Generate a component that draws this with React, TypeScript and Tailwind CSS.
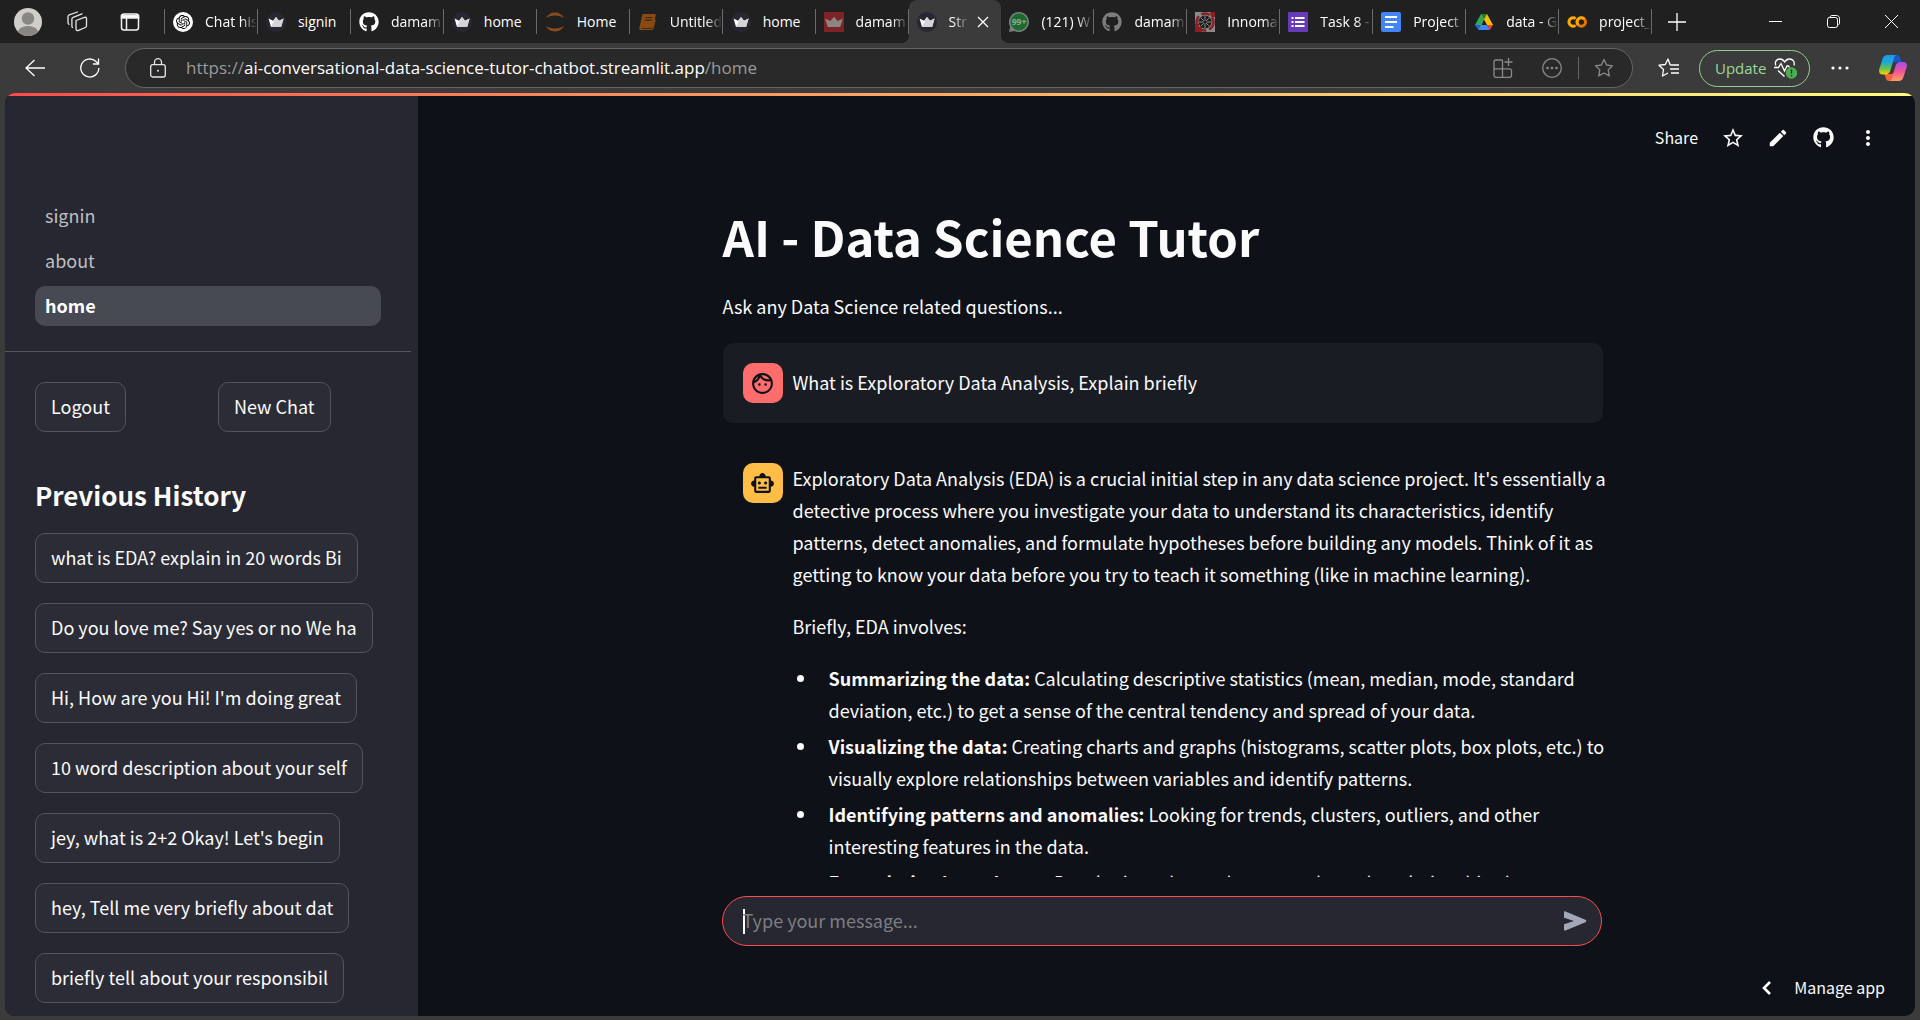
import React, { type ReactNode } from "react";
import clsx from "clsx";
import { FaGithub } from "react-icons/fa";
import { SiOpenai } from "react-icons/si";
import { MdOutlineFace, MdOutlineSmartToy, MdEdit, MdMoreVert, MdStarBorder } from "react-icons/md";

const Crown = () => (
  <svg viewBox="0 0 20 20" className="size-5 shrink-0">
    <circle cx="10" cy="10" r="10" fill="#262730" />
    <path d="M2.600 6.500 7 8.700 10 5l3 3.700 4.600-2.200-2.400 8.300H4.900z" fill="#fff" />
    <path d="M10 5l3 3.700 4.600-2.200-2.400 8.300H4.900z" fill="#d4d4d9" />
  </svg>
);

const RedCrown = () => (
  <svg viewBox="0 0 20 20" className="size-5 shrink-0">
    <rect width="20" height="20" fill="#7d2226" />
    <path d="M1 6.500 6.400 9 10 4.800 13.600 9 19 6.500 16.200 15H3.800z" fill="#8e8482" />
  </svg>
);

const Jupyter = () => (
  <svg viewBox="0 0 20 20" className="size-5 shrink-0" fill="#8a4a1e">
    <path d="M1 6.200C2.600 2.500 6 .500 10 .500s7.400 2 9 5.700C16.800 4.300 13.600 3.500 10 3.500S3.200 4.300 1 6.200zM1 13.800C3.200 15.700 6.400 16.500 10 16.500s6.800-.8 9-2.700C17.400 17.500 14 19.500 10 19.500s-7.400-2-9-5.700z" />
  </svg>
);

const Book = () => (
  <svg viewBox="0 0 20 20" className="size-5 shrink-0">
    <path d="M5.500 2h11.200c.8 0 1.200.7 1 1.400l-3 11.400c-.2.700-.7 1.100-1.400 1.100H3.800c-.5 0-.6.800 0 .8h10.400l2.700-9.500.9.800-2.400 9c-.2.700-.7 1.100-1.400 1.100H3.200C1.700 18.100 1 16.900 1.400 15.500L4.200 3.200C4.400 2.400 4.800 2 5.500 2z" fill="#8a4b12" />
    <path d="M7.500 5.500h7M6.800 8.200h7" stroke="#3a2412" strokeWidth="1.200" />
  </svg>
);

const WhatsApp = () => (
  <svg viewBox="0 0 20 20" className="size-5 shrink-0">
    <path d="M10 0a10 10 0 1 1-4.600 18.900L0 20l1.200-5.200A10 10 0 0 1 10 0z" fill="#7c807d" />
    <circle cx="10" cy="10" r="8.500" fill="#1b6b30" />
    <text x="10" y="13" textAnchor="middle" fontSize="8.500" fontWeight="700" fontFamily="Open Sans, sans-serif" fill="#8fa894">99+</text>
  </svg>
);

const Wheel = () => (
  <svg viewBox="0 0 20 20" className="size-5 shrink-0">
    <rect width="20" height="20" fill="#8b8b8b" />
    <circle cx="10" cy="10" r="8.500" fill="none" stroke="#8c1f24" strokeWidth="2.500" strokeDasharray="9 3" />
    <path d="M0 12h4v3h3v5H0zM15 0h5v5h-4z" fill="#8c1f24" />
    <circle cx="10" cy="10" r="6.500" fill="#1c1c1c" />
    <path d="M10 4v12M4 10h12M5.800 5.800l8.400 8.400M14.200 5.800l-8.400 8.400" stroke="#8b8b8b" strokeWidth="1" />
    <circle cx="10" cy="10" r="1.500" fill="#1c1c1c" />
  </svg>
);

const Forms = () => (
  <svg viewBox="0 0 20 20" className="size-5 shrink-0">
    <rect width="20" height="20" rx="1" fill="#673ab7" />
    <path d="M3.500 5h2v2h-2zM7 5h9.500v2H7zM3.500 9h2v2h-2zM7 9h9.500v2H7zM3.500 13h2v2h-2zM7 13h9.500v2H7z" fill="#fff" />
  </svg>
);

const Docs = () => (
  <svg viewBox="0 0 20 20" className="size-5 shrink-0">
    <rect width="20" height="20" rx="2" fill="#4285f4" />
    <path d="M4 4h12v2H4zM4 9h12v2H4zM4 14h8.500v2H4z" fill="#fff" />
  </svg>
);

const Drive = () => (
  <svg viewBox="0 0 20 20" className="size-5 shrink-0">
    <path d="M7 2h6l-3 5.500-4.300 10.500L1 13z" fill="#34a853" />
    <path d="M7 2h6l6 11h-6z" fill="#fbbc04" />
    <path d="M7 2 10 7.500 13 2z" fill="#188038" />
    <path d="M1 13h6l-2.600 5z" fill="#1967d2" />
    <path d="M7 13h6l2.700 5H4.400z" fill="#4285f4" />
    <path d="M13 13h6l-3.300 5z" fill="#ea4335" />
  </svg>
);

const Colab = () => (
  <svg viewBox="0 0 20 20" className="size-5 shrink-0" fill="none" strokeWidth="3">
    <path d="M8.600 6.600a4.200 4.200 0 1 0 0 6.800" stroke="#f9ab00" />
    <circle cx="14.300" cy="10" r="4.200" stroke="#e8710a" />
    <path d="M11.300 13a4.200 4.200 0 0 1 6-6" stroke="#f9ab00" />
  </svg>
);

const ChatGpt = () => (
  <span className="grid size-5 shrink-0 place-items-center rounded-full bg-white text-black">
    <SiOpenai size={14} />
  </span>
);

type Tab = { label: string; icon: ReactNode; active?: boolean; fade?: boolean };

const tabs: Tab[] = [
  { label: "Chat his", icon: <ChatGpt />, fade: true },
  { label: "signin", icon: <Crown /> },
  { label: "damam", icon: <FaGithub size={20} className="shrink-0 text-white" />, fade: true },
  { label: "home", icon: <Crown /> },
  { label: "Home", icon: <Jupyter /> },
  { label: "Untitled", icon: <Book />, fade: true },
  { label: "home", icon: <Crown /> },
  { label: "damam", icon: <RedCrown />, fade: true },
  { label: "Str", icon: <Crown />, active: true, fade: true },
  { label: "(121) W", icon: <WhatsApp />, fade: true },
  { label: "damam", icon: <FaGithub size={20} className="shrink-0 text-[#7d7d7d]" />, fade: true },
  { label: "Innoma", icon: <Wheel />, fade: true },
  { label: "Task 8 -", icon: <Forms />, fade: true },
  { label: "Project", icon: <Docs />, fade: true },
  { label: "data - G", icon: <Drive />, fade: true },
  { label: "project_", icon: <Colab />, fade: true },
];

const TabLabel = ({ tab }: { tab: Tab }) => (
  <span
    className={clsx(
      "min-w-0 flex-1 overflow-hidden whitespace-nowrap text-left",
      tab.fade && "[mask-image:linear-gradient(to_right,black_calc(100%-16px),transparent)]",
    )}
  >
    {tab.label}
  </span>
);

const TabButton = ({ tab }: { tab: Tab }) =>
  tab.active ? (
    <div className="relative flex min-w-0 items-center rounded-t-lg bg-[#3b3b3b] pl-2 pr-3">
      <span className="absolute bottom-0 -left-2 size-2 bg-[radial-gradient(circle_at_top_left,transparent_8px,#3b3b3b_8px)]" />
      <span className="absolute bottom-0 -right-2 size-2 bg-[radial-gradient(circle_at_top_right,transparent_8px,#3b3b3b_8px)]" />
      <button className="flex min-w-0 flex-1 items-center gap-3">
        {tab.icon}
        <TabLabel tab={tab} />
      </button>
      <button aria-label="Close tab" className="ml-2 shrink-0">
        <svg viewBox="0 0 12 12" className="size-3" stroke="#fff" strokeWidth="1.300"><path d="M1 1l10 10M11 1 1 11" /></svg>
      </button>
    </div>
  ) : (
    <button className="flex min-w-0 items-center gap-3 pl-2">
      {tab.icon}
      <span className="flex min-w-0 flex-1 items-center">
        <TabLabel tab={tab} />
        <span className="h-[25px] w-px shrink-0 bg-[#6b6b6b]" />
      </span>
    </button>
  );

const TitleBar = () => (
  <div className="flex h-[43px] shrink-0 bg-[#202020] text-sm text-white">
    <div className="flex w-[165px] shrink-0 items-center pl-3.5">
      <button aria-label="Profile">
        <svg viewBox="0 0 28 28" className="size-7">
          <clipPath id="avatar"><circle cx="14" cy="14" r="14" /></clipPath>
          <g clipPath="url(#avatar)">
            <rect width="28" height="28" fill="#d0cecb" />
            <circle cx="14" cy="10.500" r="6.200" fill="#8a8683" />
            <ellipse cx="14" cy="25" rx="10.500" ry="7" fill="#8a8683" />
          </g>
        </svg>
      </button>
      <button aria-label="Workspaces" className="ml-6">
        <svg viewBox="0 0 22 22" className="size-[22px]" fill="none" stroke="#e6e6e6" strokeWidth="1.300" strokeLinejoin="round" strokeLinecap="round">
          <path d="M10 9.500l8.500-3.200c1-.4 2 .2 2 1.200v7.300c0 .8-.4 1.400-1.200 1.700l-6.800 2.900c-1.200.5-2.500-.2-2.500-1.500z" />
          <path d="M6.500 16.500l-.6-1V8c0-.8.400-1.400 1.200-1.700L16 2.800M3 13.500l-1-1.500V5.500c0-.8.400-1.400 1.200-1.700L11.500 1" />
        </svg>
      </button>
      <button aria-label="Tab actions" className="ml-8">
        <svg viewBox="0 0 20 20" className="size-5" fill="none" stroke="#f2f2f2" strokeWidth="1.500">
          <rect x="1.500" y="2" width="17" height="16" rx="2.500" />
          <path d="M1.500 3.500h17V6h-17z" fill="#fff" />
          <path d="M6.500 6v12" />
        </svg>
      </button>
      <span className="ml-auto h-[25px] w-px bg-[#6b6b6b]" />
    </div>
    <div className="grid min-w-0 flex-1 auto-cols-fr grid-flow-col">
      {tabs.map((t, i) => <TabButton key={i} tab={t} />)}
    </div>
    <div className="flex w-[268px] shrink-0 items-center pl-4 pr-[22px]">
      <button aria-label="New tab">
        <svg viewBox="0 0 18 18" className="size-[18px]" stroke="#fff" strokeWidth="1.300"><path d="M9 0v18M0 9h18" /></svg>
      </button>
      <div className="ml-auto flex items-center gap-[45px]">
        <button aria-label="Minimize"><svg viewBox="0 0 13 13" className="size-[13px]" stroke="#fff"><path d="M0 6.500h13" /></svg></button>
        <button aria-label="Restore">
          <svg viewBox="0 0 13 13" className="size-[13px]" fill="none" stroke="#fff">
            <rect x=".5" y="2.500" width="10" height="10" rx="2" />
            <path d="M3 2.500C3 1.200 3.800.500 5 .500h4.500c1.800 0 3 1.200 3 3V8c0 1.200-.7 2-2 2" />
          </svg>
        </button>
        <button aria-label="Close"><svg viewBox="0 0 13 13" className="size-[13px]" stroke="#fff"><path d="M0 0l13 13M13 0 0 13" /></svg></button>
      </div>
    </div>
  </div>
);

const starPath = "M10 1.500l2.600 5.500 5.900.8-4.300 4.100 1.100 6L10 15l-5.300 2.900 1.100-6L1.500 7.800l5.900-.8z";

const Toolbar = () => (
  <div className="flex h-[50px] shrink-0 items-center pl-[25px] pr-[13px] text-white">
    <button aria-label="Back">
      <svg viewBox="0 0 20 18" className="h-[18px] w-5" fill="none" stroke="#fff" strokeWidth="1.300"><path d="M9.500 1 1 9l8.500 8M1 9h19" /></svg>
    </button>
    <button aria-label="Refresh" className="ml-[35px]">
      <svg viewBox="0 0 20 20" className="size-5" fill="none" stroke="#fff" strokeWidth="1.300"><path d="M18.800 10A9 9 0 1 1 16 3.500l2.300 2M18.500.500v5.500h-5.500" /></svg>
    </button>
    <div className="ml-[25px] flex h-10 min-w-0 flex-1 items-center rounded-full border border-[#666] bg-[#292929] pl-6 pr-[18px]">
      <svg viewBox="0 0 16 20" className="h-5 w-4 shrink-0" fill="none" stroke="#e6e6e6" strokeWidth="1.300">
        <rect x=".7" y="6.700" width="14.600" height="12.300" rx="2" />
        <path d="M4.500 6.700V4.200a3.500 3.500 0 0 1 7 0v2.500" />
        <circle cx="8" cy="12.800" r="1" fill="#e6e6e6" stroke="none" />
      </svg>
      <a href="#home" className="ml-5 flex-1 truncate text-[17px] text-[#9a9a9a]">
        https://<span className="text-white">ai-conversational-data-science-tutor-chatbot.streamlit.app</span>/home
      </a>
      <button aria-label="Apps" className="shrink-0">
        <svg viewBox="0 0 20 20" className="size-5" fill="none" stroke="#8a8a8a" strokeWidth="1.300">
          <path d="M9.500 2H3a2 2 0 0 0-2 2v13.500a1.800 1.800 0 0 0 2 1.800h13.500a2 2 0 0 0 2-2v-4.500a2 2 0 0 0-2-2H1M9.500 2v17M15.500 0v8M11.500 4h8" />
        </svg>
      </button>
      <button aria-label="Page actions" className="ml-[29px] shrink-0">
        <svg viewBox="0 0 20 20" className="size-5" fill="none" stroke="#8a8a8a" strokeWidth="1.300">
          <circle cx="10" cy="10" r="9.300" />
          <g fill="#8a8a8a" stroke="none"><circle cx="5.500" cy="10" r="1.300" /><circle cx="10" cy="10" r="1.300" /><circle cx="14.500" cy="10" r="1.300" /></g>
        </svg>
      </button>
      <span className="ml-4 h-[22px] w-px bg-[#666]" />
      <button aria-label="Add favorite" className="ml-[15px] shrink-0">
        <svg viewBox="0 0 20 20" className="size-5" fill="none" stroke="#8a8a8a" strokeWidth="1.300" strokeLinejoin="round"><path d={starPath} /></svg>
      </button>
    </div>
    <button aria-label="Favorites" className="ml-[25px]">
      <svg viewBox="0 0 21 20" className="h-5 w-[21px]" fill="none" stroke="#fff" strokeWidth="1.300" strokeLinejoin="round">
        <path d="M13 7l-.8-.1L10 1 7.300 6.500 1 7.200l4.500 4.300L4.500 18l5.500-3M13 7h8M12 11h9M13 15h8" />
      </svg>
    </button>
    <button className="ml-5 flex h-[37px] w-[111px] items-center justify-between rounded-full border border-[#8fd08f] pl-[15px] pr-3 text-[15px] text-[#9ad89a]">
      Update
      <svg viewBox="0 0 23 21" className="h-[21px] w-[23px]" fill="none" stroke="#fff" strokeWidth="1.300">
        <path d="M1.800 7.500C.5 4 2.500 1 5.700 1 8 1 9.600 2 10.700 4 11.800 2 13.200 1 15.500 1c3.500 0 5.500 3 4.500 6.500M4 12.500l6.500 6M0 9.500h4.500L7 5.500l3.500 7.500L13 8h1.500l1 1.500" />
        <circle cx="17.500" cy="15" r="5.700" fill="#4caf50" stroke="none" />
        <path d="M17.500 11.500v4M17.500 17v1.300" stroke="#1d1d1d" />
      </svg>
    </button>
    <button aria-label="Settings" className="ml-[21px]">
      <svg viewBox="0 0 18 4" className="h-1 w-[18px]" fill="#fff"><circle cx="2" cy="2" r="1.600" /><circle cx="9" cy="2" r="1.600" /><circle cx="16" cy="2" r="1.600" /></svg>
    </button>
    <button aria-label="Copilot" className="ml-[30px]">
      <svg viewBox="0 0 28 26" className="h-[26px] w-7">
        <defs>
          <linearGradient id="cpA" x1="0" y1="0" x2="0" y2="1"><stop offset="0" stopColor="#1a9be8" /><stop offset=".35" stopColor="#1aa7e0" /><stop offset=".7" stopColor="#6cc04a" /><stop offset="1" stopColor="#ffd500" /></linearGradient>
          <linearGradient id="cpB" x1="0" y1="0" x2="0" y2="1"><stop offset="0" stopColor="#a34ff0" /><stop offset=".5" stopColor="#f0559a" /><stop offset="1" stopColor="#ffa25a" /></linearGradient>
        </defs>
        <path d="M15 0h3c2 0 2.800 1.200 3.300 3l1 4h-6c-2 0-3 .8-3.500 2.500z" fill="#1856c9" />
        <path d="M13 26h-3c-2 0-2.800-1.200-3.300-3l-1-4h6c2 0 3-.8 3.500-2.500z" fill="#f2603c" />
        <path d="M8.500 0H18c-2 0-2.600 1.500-3.200 3.500L11.500 15c-.8 2.800-2.300 4.500-5 4.500H4c-3.500 0-4.500-2.500-3.700-5.500L3.500 4C4.300 1.500 6 0 8.500 0z" fill="url(#cpA)" />
        <path d="M19.500 26H10c2 0 2.600-1.500 3.200-3.500L16.500 11c.8-2.800 2.300-4 5-4H24c3.500 0 4.500 2.500 3.700 5l-3.200 10c-.8 2.500-2.500 4-5 4z" fill="url(#cpB)" />
      </svg>
    </button>
  </div>
);

const history = [
  "what is EDA? explain in 20 words Bi",
  "Do you love me? Say yes or no We ha",
  "Hi, How are you Hi! I'm doing great",
  "10 word description about your self",
  "jey, what is 2+2 Okay! Let's begin",
  "hey, Tell me very briefly about dat",
  "briefly tell about your responsibil",
];

const SideButton = ({ children }: { children: ReactNode }) => (
  <button className="h-[50px] whitespace-nowrap rounded-[10px] border border-[#53545c] bg-[#2b2c36] px-[15px] pb-0.5">{children}</button>
);

const Sidebar = () => (
  <aside className="w-[413px] shrink-0 overflow-hidden bg-[#262730] pt-[100px]">
    <nav className="flex flex-col gap-[5px] pl-[30px] pr-[37px] leading-[38px] text-[#bebfc3]">
      <a href="#signin" className="rounded-[10px] px-2.5 pb-0.5">signin</a>
      <a href="#about" className="rounded-[10px] px-2.5 pb-0.5">about</a>
      <a href="#home" aria-current="page" className="rounded-[10px] bg-[#474953] px-2.5 pb-0.5 font-bold text-white">home</a>
    </nav>
    <hr className="mr-[7px] mt-[25px] border-[#53545c]" />
    <div className="grid grid-cols-2 gap-5 pl-[30px] pr-[37px] pt-[30px]">
      <div><SideButton>Logout</SideButton></div>
      <div><SideButton>New Chat</SideButton></div>
    </div>
    <h2 className="px-[30px] pt-[43px] text-[26px] font-bold leading-10">Previous History</h2>
    <div className="flex flex-col items-start gap-5 px-[30px] pt-[18px]">
      {history.map((h) => <SideButton key={h}>{h}</SideButton>)}
    </div>
  </aside>
);

const points = [
  ["Summarizing the data:", "Calculating descriptive statistics (mean, median, mode, standard deviation, etc.) to get a sense of the central tendency and spread of your data."],
  ["Visualizing the data:", "Creating charts and graphs (histograms, scatter plots, box plots, etc.) to visually explore relationships between variables and identify patterns."],
  ["Identifying patterns and anomalies:", "Looking for trends, clusters, outliers, and other interesting features in the data."],
  ["Formulating hypotheses:", "Developing educated guesses about the relationships between variables in your data."],
];

const Main = () => (
  <main className="flex min-w-0 flex-1 flex-col">
    <header className="flex h-[83px] shrink-0 items-center justify-end pr-[35px] text-base">
      <button className="pb-0.5">Share</button>
      <button aria-label="Star" className="ml-[23px]"><MdStarBorder size={24} /></button>
      <button aria-label="Edit" className="ml-[22px]"><MdEdit size={22} /></button>
      <button aria-label="GitHub" className="ml-6"><FaGithub size={21} /></button>
      <button aria-label="More" className="ml-[22px]"><MdMoreVert size={24} /></button>
    </header>
    <div className="min-h-0 flex-1 overflow-hidden px-5 pr-7">
      <div className="mx-auto max-w-[880px]">
        <h1 className="pt-6 text-[49px] font-bold leading-[66px]">AI - Data Science Tutor</h1>
        <p className="pb-px pt-[21px] leading-8">Ask any Data Science related questions...</p>
        <section className="mt-5 flex gap-2.5 rounded-[10px] bg-[#1a1c24] p-5">
          <span className="grid size-10 shrink-0 place-items-center rounded-[10px] bg-[#ff6c6c] text-[#0e1117]"><MdOutlineFace size={25} /></span>
          <p className="pb-0.5 leading-[38px]">What is Exploratory Data Analysis, Explain briefly</p>
        </section>
        <section className="-mr-2 flex gap-2.5 pl-5 pt-[39px]">
          <span className="mt-px grid size-10 shrink-0 place-items-center rounded-[10px] bg-[#ffbd45] text-[#0e1117]"><MdOutlineSmartToy size={25} /></span>
          <div className="min-w-0 leading-8">
            <p>Exploratory Data Analysis (EDA) is a crucial initial step in any data science project. It's essentially a detective process where you investigate your data to understand its characteristics, identify patterns, detect anomalies, and formulate hypotheses before building any models. Think of it as getting to know your data before you try to teach it something (like in machine learning).</p>
            <p className="pt-5">Briefly, EDA involves:</p>
            <ul className="flex flex-col gap-1 pt-5">
              {points.map(([t, d]) => (
                <li key={t} className="flex before:ml-1 before:mr-[25px] before:mt-[13px] before:size-[7px] before:shrink-0 before:rounded-full before:bg-[#fafafa] before:content-['']">
                  <p><strong>{t}</strong> {d}</p>
                </li>
              ))}
            </ul>
          </div>
        </section>
      </div>
    </div>
    <div className="shrink-0 pl-5 pr-[30px] pt-[19px]">
      <form className="mx-auto flex h-[50px] max-w-[880px] items-center rounded-full border border-[#ff4b4b] bg-[#262730] pl-5 pr-3.5" onSubmit={(e) => e.preventDefault()}>
        <span className="-mr-0.5 h-[25px] w-0.5 bg-white" />
        <input aria-label="Message" placeholder="Type your message..." className="min-w-0 flex-1 bg-transparent pb-0.5 outline-none placeholder:text-[#7d7e84]" />
        <button aria-label="Send">
          <svg viewBox="0 0 24 20" className="h-5 w-6" fill="#a3a8b8"><path d="M1 1.500C1 .500 1.700.100 2.600.500l19.800 8.300c1.200.5 1.200 1.900 0 2.400L2.600 19.500C1.700 19.900 1 19.500 1 18.500v-5.300L11 10 1 6.800z" /></svg>
        </button>
      </form>
    </div>
    <footer className="flex h-[70px] shrink-0 items-center justify-end pr-[30px] pt-3.5 text-base">
      <button className="flex items-center gap-[23px]">
        <svg viewBox="0 0 9 14" className="h-3.5 w-[9px]" fill="none" stroke="#fff" strokeWidth="2.600"><path d="M8 1 2 7l6 6" /></svg>
        <span className="pb-0.5">Manage app</span>
      </button>
    </footer>
  </main>
);

export default function App() {
  return (
    <div className="flex h-screen flex-col overflow-hidden bg-[#3b3b3b] font-['Open_Sans',sans-serif]">
      <TitleBar />
      <Toolbar />
      <div className="mx-[5px] mb-1 flex min-h-0 flex-1 flex-col overflow-hidden rounded-[10px] bg-[#0e1117] font-['Noto_Sans_CJK_SC',sans-serif] text-[18px] text-[#fafafa]">
        <div className="h-[3px] shrink-0 bg-linear-to-r from-[#ff4b4b] to-[#fffd80]" />
        <div className="flex min-h-0 flex-1">
          <Sidebar />
          <Main />
        </div>
      </div>
    </div>
  );
}
